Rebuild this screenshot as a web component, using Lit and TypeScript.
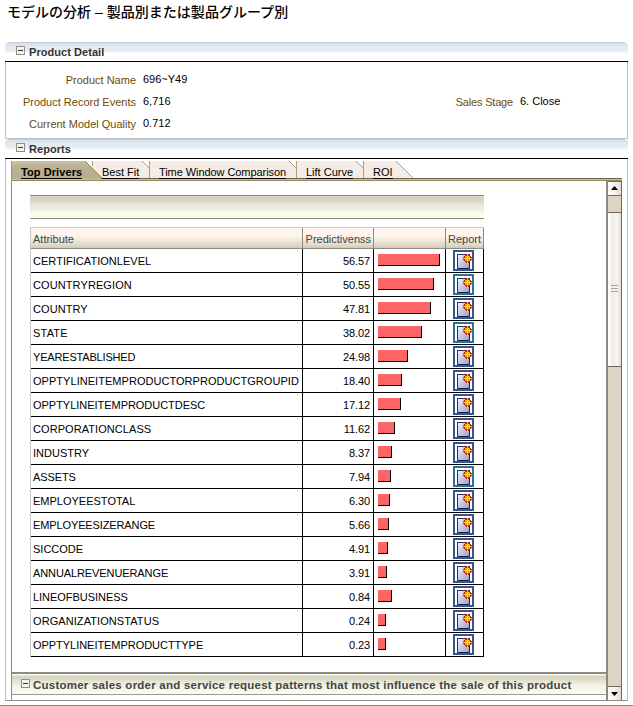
import { LitElement, html, svg, css } from "lit";
import { customElement, property } from "lit/decorators.js";
import { styleMap } from "lit/directives/style-map.js";

interface Driver {
  name: string;
  score: string;
  bar: number;
  visited?: boolean;
  spacing: number;
}

const DRIVERS: Driver[] = [
  { name: "CERTIFICATIONLEVEL", score: "56.57", bar: 62, spacing: 0.04 },
  { name: "COUNTRYREGION", score: "50.55", bar: 56, visited: true, spacing: 0.1 },
  { name: "COUNTRY", score: "47.81", bar: 53, spacing: 0.07 },
  { name: "STATE", score: "38.02", bar: 44, visited: true, spacing: 0.2 },
  { name: "YEARESTABLISHED", score: "24.98", bar: 30, spacing: -0.18 },
  { name: "OPPTYLINEITEMPRODUCTORPRODUCTGROUPID", score: "18.40", bar: 24, spacing: 0.04 },
  { name: "OPPTYLINEITEMPRODUCTDESC", score: "17.12", bar: 23, spacing: -0.03 },
  { name: "CORPORATIONCLASS", score: "11.62", bar: 17, spacing: 0.07 },
  { name: "INDUSTRY", score: "8.37", bar: 14, spacing: 0 },
  { name: "ASSETS", score: "7.94", bar: 13, visited: true, spacing: -0.1 },
  { name: "EMPLOYEESTOTAL", score: "6.30", bar: 12, spacing: 0 },
  { name: "EMPLOYEESIZERANGE", score: "5.66", bar: 11, spacing: -0.12 },
  { name: "SICCODE", score: "4.91", bar: 10, spacing: 0 },
  { name: "ANNUALREVENUERANGE", score: "3.91", bar: 9, spacing: -0.1 },
  { name: "LINEOFBUSINESS", score: "0.84", bar: 14, spacing: -0.04 },
  { name: "ORGANIZATIONSTATUS", score: "0.24", bar: 8, spacing: 0.08 },
  { name: "OPPTYLINEITEMPRODUCTTYPE", score: "0.23", bar: 8, spacing: -0.04 },
];

@customElement("toggle-box")
export class ToggleBox extends LitElement {
  static styles = css`
    :host { display: block; width: 9px; height: 9px; flex: none; }
    svg { display: block; }
  `;
  render() {
    return html`<svg width="9" height="9" shape-rendering="crispEdges">
      <rect x="0.5" y="0.5" width="8" height="8" fill="#f4f3ea" stroke="#8f9082" />
      <path d="M2 4.500H7" stroke="#333" />
    </svg>`;
  }
}

@customElement("report-icon")
export class ReportIcon extends LitElement {
  @property({ type: Boolean }) visited = false;
  static styles = css`
    :host { display: block; width: 21px; height: 21px; }
    svg { display: block; }
  `;
  render() {
    return html`<svg width="21" height="21" shape-rendering="crispEdges">
      <defs>
        <linearGradient id="g" x1="0" y1="0" x2="1" y2="1">
          <stop offset="0" stop-color="#f4f4fa" />
          <stop offset="1" stop-color="#9c9cbe" />
        </linearGradient>
      </defs>
      <rect x="1" y="1" width="19" height="19" fill="#fff" stroke=${this.visited ? "#237798" : "#35568b"} stroke-width="2" />
      <rect x="4.5" y="4.5" width="12" height="14" fill="url(#g)" stroke="#343064" />
      <path d="M5 18.500H17M16.500 5V19" stroke="#211c48" />
      ${svg`<path d="M13 4h3v1h1v1h1v1h1v3h-1v1h-1v1h-1v1h-3v-1h-1v-1h-1v-1h-1v-3h1v-1h1v-1h1z" fill="#b3202c"/>
      <path d="M14 4h1v9h-1zM10 8h9v1h-9zM13 6h3v5h-3zM12 7h5v3h-5z" fill="#f5c51b"/>
      <path d="M12 6h1v1h-1zM16 6h1v1h-1zM12 10h1v1h-1zM16 10h1v1h-1z" fill="#e8862a"/>
      <path d="M13 7h1v1h-1zM15 7h1v1h-1zM13 9h1v1h-1zM15 9h1v1h-1z" fill="#d98a1c"/>
      <path d="M14 7h1v3h-1zM13 8h3v1h-3z" fill="#ffed45"/>`}
    </svg>`;
  }
}

@customElement("app-root")
export class AppRoot extends LitElement {
  static styles = css`
    :host {
      display: block; position: relative; width: 633px; height: 706px; overflow: hidden;
      background: #fff; color: #000; box-sizing: border-box;
      font: 11px/14px "Liberation Sans", Arial, sans-serif;
      border-bottom: 1px solid #858585;
    }
    * { box-sizing: border-box; }
    .title {
      margin: 0; height: 42px; padding: 3px 0 0 7px; white-space: pre;
      font: 500 14px/19px "Liberation Sans", "Noto Sans CJK JP", sans-serif;
      letter-spacing: 0.02px;
    }
    .panel {
      margin-left: 5px; width: 623px; border: 1px solid #b9c5c5; border-top-color: #c9ccd6;
      border-radius: 5px 5px 0 0;
    }
    .detail { height: 97px; border-bottom-color: #b9c1c1; }
    .reports { height: 562px; border-bottom-color: #8f8f8f; }
    .head {
      display: flex; align-items: flex-start; gap: 4px; height: 19px; padding: 3px 0 0 11px;
      margin: 0 -1px; border-bottom: 1px solid #000; border-radius: 4px 4px 0 0;
      background: linear-gradient(#dbe1ec 0 2px, #e3ebf2 3px 7px, #f0f1fb 8px 9px, #fff 10px);
    }
    .head b { color: #333; line-height: 13px; height: 13px; letter-spacing: 0.05px; }
    .fields { display: grid; grid-template-columns: 130px 312px 65px 1fr; grid-auto-rows: 22px; padding-top: 9px; line-height: 16px; }
    .label { color: #704a08; text-align: right; padding-top: 1px; white-space: nowrap; }
    .stage { letter-spacing: -0.18px; }
    .value { padding-left: 7px; white-space: nowrap; }
    .tabs { position: relative; display: flex; height: 20px; margin: 2px 0 0 5px; width: 611px; }
    .shape { position: absolute; left: 0; top: 0; }
    .tab { position: relative; padding-left: 10px; padding-top: 5px; height: 20px; white-space: nowrap; }
    .tab span { display: block; width: max-content; height: 13px; line-height: 12px; border-bottom: 1px solid #000; }
    .t0 { width: 81px; letter-spacing: 0.08px; } .t1 { width: 57px; }
    .t2 { width: 147px; letter-spacing: -0.07px; } .t3 { width: 67px; } .t4 { width: 50px; }
    .body { display: flex; margin-left: 5px; width: 611px; height: 519px; border-left: 1px solid #8d8b83; }
    .content { flex: 1; overflow: hidden; padding-top: 14px; }
    .toolbar {
      width: 454px; height: 24px; margin-left: 18px; border: solid #8b8b82; border-width: 1px 0;
      background: linear-gradient(#d9d4c5 0 1px, #d3d0bf 3px, #e3ded0 7px, #e9e9dc 9px 13px, #f7f7e8 15px, #fffff0 22px);
    }
    .table { margin: 8px 0 0 18px; width: 454px; border-left: 1px solid #c7c7d4; }
    .row { display: grid; grid-template-columns: 272px 71px 72px 38px; height: 24px; line-height: 24px; }
    .row > div { border-right: 1px solid #000; border-bottom: 1px solid #000; white-space: nowrap; overflow: hidden; }
    .row.hrow { height: 22px; color: #444; border-top: 1px solid #c9c7dc; line-height: 23px;
      background: linear-gradient(#fff5ee 0 7px, #f2ede0 11px, #dbd6c4 18px, #c5c2af 21px); }
    .row.hrow > div { border-color: #8d8b83; }
    .name { padding-left: 2px; }
    .score { text-align: right; padding-right: 3px; letter-spacing: -0.1px; }
    .hrow .score { padding-right: 2px; letter-spacing: 0; }
    .barcell { padding: 5px 0 0 4px; }
    .bar { height: 12px; background: #ff6464; border: solid #000; border-width: 0 1px 1px 0; }
    .iconcell { padding: 1px 0 0 7px; }
    .hrow .iconcell { padding: 0 0 0 2px; }
    .patterns { margin-top: 15px; height: 23px; border-top: 2px solid #8d8b83; border-bottom: 1px solid #999a90;
      display: flex; gap: 3px; padding: 5px 0 0 9px;
      background: linear-gradient(#fbfbf5 0 1px, #d5d5c1 2px 3px, #e0dfce 6px, #f1f1e5 11px, #fbfbf2 20px); }
    .patterns b { color: #444; font-size: 11.5px; line-height: 14px; white-space: nowrap; letter-spacing: 0.235px; margin-top: -1px; }
    .scroll { width: 16px; display: flex; flex-direction: column; border-left: 2px solid #8e887c; border-right: 1px solid #756957; background: #ddd4c6; }
    .btn { height: 15px; flex: none; border-bottom: 1px solid #756957; border-top: 1px solid #756957; background: linear-gradient(90deg, #fff, #f4eee7 60%, #e3dbd2); }
    .btn svg, .thumb svg { display: block; }
    .thumb { height: 155px; margin-top: 16px; flex: none; border: solid #756957; border-width: 1px 0; padding-top: 72px;
      background: linear-gradient(90deg, #fff 0 2px, #f4ece6 3px 6px, #f8f5f2 9px, #e5e0dc 12px); }
    .down { margin-top: auto; border-bottom: 0; height: 14px; }
  `;

  render() {
    return html`
      <h1 class="title">モデルの分析 – 製品別または製品グループ別</h1>
      <section class="panel detail">
        <div class="head"><toggle-box></toggle-box><b>Product Detail</b></div>
        <div class="fields">
          <div class="label">Product Name</div><div class="value">696~Y49</div><div></div><div></div>
          <div class="label">Product Record Events</div><div class="value">6,716</div>
          <div class="label stage">Sales Stage</div><div class="value">6. Close</div>
          <div class="label">Current Model Quality</div><div class="value">0.712</div>
        </div>
      </section>
      <section class="panel reports">
        <div class="head"><toggle-box></toggle-box><b>Reports</b></div>
        <nav class="tabs">
          <svg class="shape" width="611" height="20">
            <defs><linearGradient id="tan" x1="0" y1="0" x2="0" y2="1">
              <stop offset="0" stop-color="#cbc1a8" /><stop offset=".35" stop-color="#bcb093" /><stop offset="1" stop-color="#b9ad90" />
            </linearGradient></defs>
            <path d="M81 0H385L402 17H81z" fill="#f5ece6" />
            <path d="M131 0H138V7zM278 0H285V7zM345 0H352V7z" fill="#fff9f5" />
            <path d="M131 0L138.500 7.500M278 0L285.500 7.500M345 0L352.500 7.500M385 0L402 17M81.500 0V5M138.500 0V17M285.500 0V17M352.500 0V17" fill="none" stroke="#aaa082" />
            <path d="M0 0H74L92 18H0z" fill="url(#tan)" />
            <path d="M74 0L92 18" stroke="#8f8260" />
            <path d="M.5 0V20" stroke="#a89466" />
            <path d="M90 17.500H611" stroke="#67654d" />
            <path d="M0 18.500H611" stroke="#c7c1a7" />
            <path d="M0 19.500H611" stroke="#988960" />
          </svg>
          <div class="tab t0"><span><b>Top Drivers</b></span></div>
          <div class="tab t1"><span>Best Fit</span></div>
          <div class="tab t2"><span>Time Window Comparison</span></div>
          <div class="tab t3"><span>Lift Curve</span></div>
          <div class="tab t4"><span>ROI</span></div>
        </nav>
        <div class="body">
          <div class="content">
            <div class="toolbar"></div>
            <div class="table">
              <div class="row hrow">
                <div class="name">Attribute</div><div class="score">Predictivenss</div><div></div><div class="iconcell">Report</div>
              </div>
              ${DRIVERS.map((d) => html`
                <div class="row">
                  <div class="name"><span style=${styleMap({ letterSpacing: `${d.spacing}px` })}>${d.name}</span></div>
                  <div class="score">${d.score}</div>
                  <div class="barcell"><div class="bar" style=${styleMap({ width: `${d.bar}px` })}></div></div>
                  <div class="iconcell"><report-icon ?visited=${d.visited}></report-icon></div>
                </div>`)}
            </div>
            <div class="patterns">
              <toggle-box></toggle-box>
              <b>Customer sales order and service request patterns that most influence the sale of this product</b>
            </div>
          </div>
          <div class="scroll">
            <div class="btn"><svg width="13" height="13"><path d="M6.500 4L10 8H3z" fill="#000" /></svg></div>
            <div class="thumb"><svg width="13" height="8" shape-rendering="crispEdges"><path d="M3 .5H10M3 3.500H10M3 6.500H10" stroke="#b1a08d" /></svg></div>
            <div class="btn down"><svg width="13" height="13"><path d="M3 5H10L6.500 9z" fill="#000" /></svg></div>
          </div>
        </div>
      </section>
    `;
  }
}
